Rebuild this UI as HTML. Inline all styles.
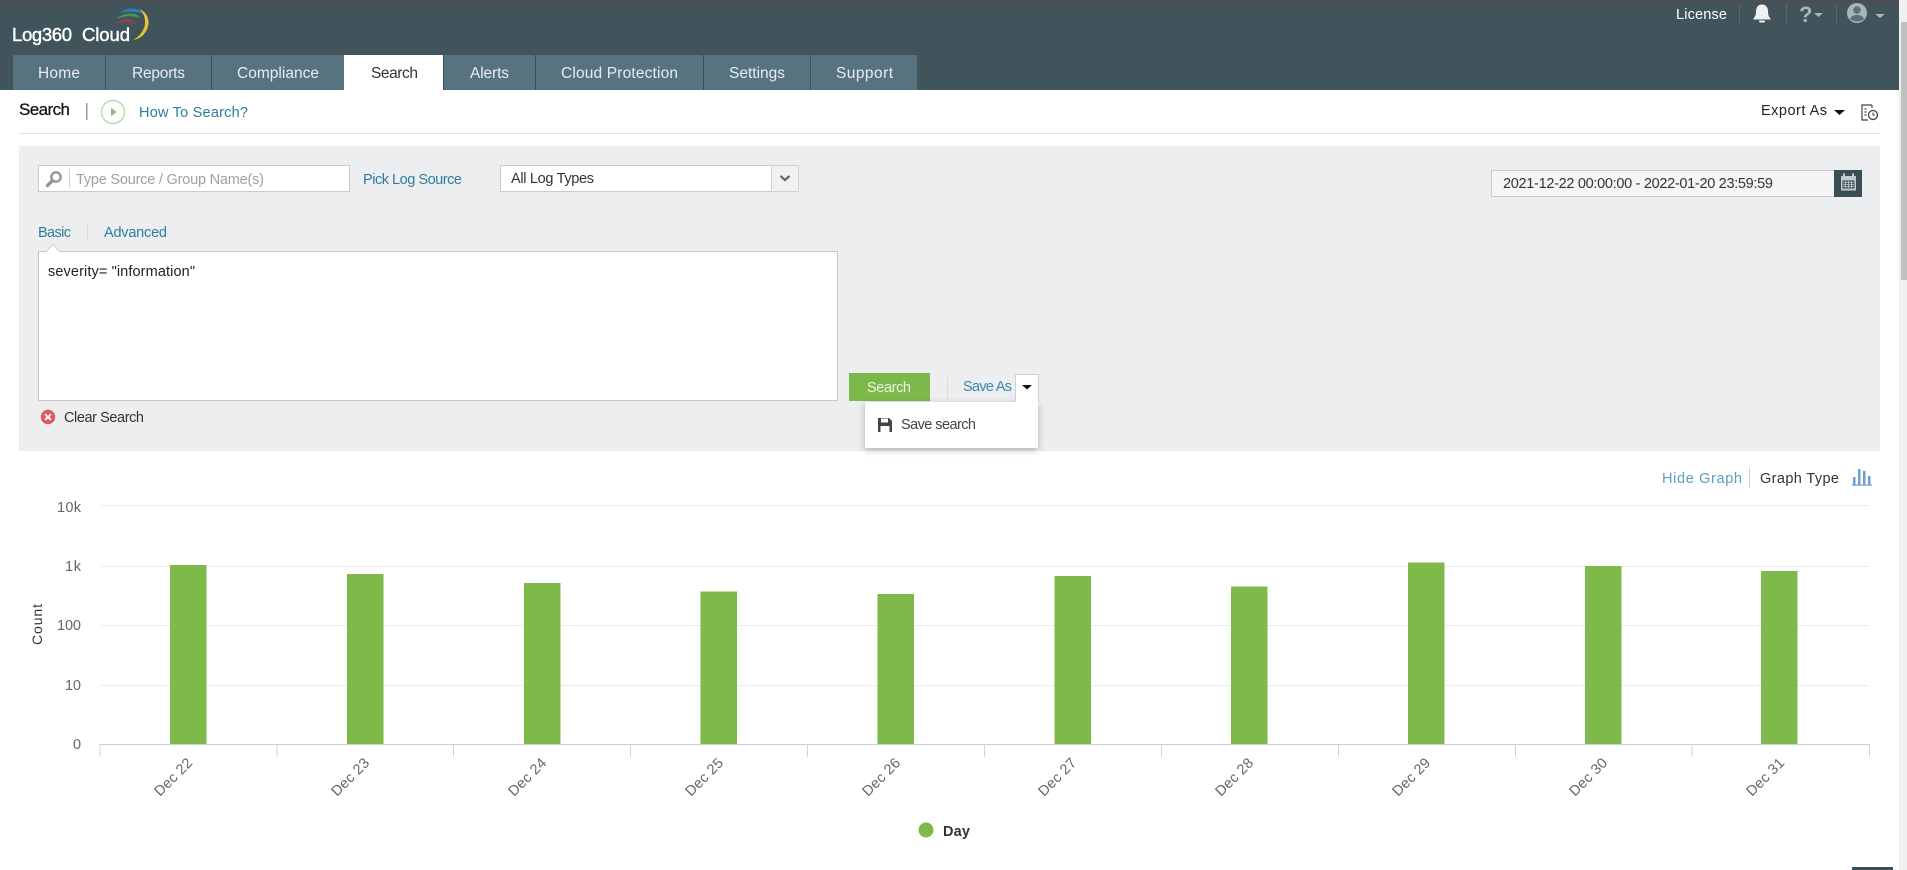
<!DOCTYPE html>
<html lang="en">
<head>
<meta charset="utf-8">
<title>Log360 Cloud - Search</title>
<style>
html,body{margin:0;padding:0;width:1907px;height:870px;overflow:hidden;background:#fff}
svg{display:block}
text{font-family:"Liberation Sans",Arial,sans-serif;font-size:14.5px;white-space:pre}
.tab{font-size:15.5px;fill:#e6edf0}
.lnk{fill:#2e7d9e}
.ax{font-size:14.5px;fill:#666}
.dt{font-size:14.5px;fill:#666}
</style>
</head>
<body>
<svg xmlns="http://www.w3.org/2000/svg" width="1907" height="870" viewBox="0 0 1907 870">
<defs>
<filter id="sh" x="-20%" y="-20%" width="140%" height="150%"><feDropShadow dx="0" dy="2" stdDeviation="3.5" flood-color="#000" flood-opacity=".28"/></filter>
</defs>
<rect width="1907" height="870" fill="#fff"/>
<!-- scrollbar -->
<rect x="1899" y="0" width="8" height="870" fill="#f0f0f0"/>
<rect x="1901" y="22" width="6" height="258" fill="#c1c1c1"/>
<!-- header -->
<rect x="0" y="0" width="1899" height="90" fill="#41545c"/>
<rect x="0" y="0" width="1899" height="3" fill="#4b4f52"/>
<!-- logo -->
<text x="12" y="41" fill="#fff" stroke="#fff" stroke-width=".45" textLength="60" style="font-size:18.5px">Log360</text>
<text x="82" y="41" fill="#fff" stroke="#fff" stroke-width=".45" textLength="48" style="font-size:18.5px">Cloud</text>
<path d="M139 9C147 12 149 19 148.500 24C147 33 141 39 133 40C139 37 144 31 145 24C145.500 17 143 12 139 9Z" fill="#e3c62c"/>
<path d="M120 13C125 8 134 7 141 11L143 14C136 11 127 11 120 13Z" fill="#2c7fb0"/>
<path d="M116 19C121 14 130 12 138 15L140 18C132 15 123 16 116 19Z" fill="#3f9a58"/>
<path d="M115 24C120 19 128 18 134 21L136 24C129 21 122 21 115 24Z" fill="#a93a46"/>
<!-- tabs -->
<rect x="12" y="55" width="905" height="35" fill="#587380"/>
<rect x="344" y="55" width="99" height="36" fill="#fff"/>
<g fill="#3c505a"><rect x="105" y="55" width="1" height="35"/><rect x="211" y="55" width="1" height="35"/><rect x="443" y="55" width="1" height="35"/><rect x="535" y="55" width="1" height="35"/><rect x="703" y="55" width="1" height="35"/><rect x="810" y="55" width="1" height="35"/><rect x="12" y="55" width="1" height="35"/></g>
<text class="tab" x="38" y="78" textLength="42">Home</text>
<text class="tab" x="132" y="78" textLength="53">Reports</text>
<text class="tab" x="237" y="78" textLength="82">Compliance</text>
<text class="tab" x="371" y="78" textLength="47" style="fill:#333">Search</text>
<text class="tab" x="470" y="78" textLength="39">Alerts</text>
<text class="tab" x="561" y="78" textLength="117">Cloud Protection</text>
<text class="tab" x="729" y="78" textLength="56">Settings</text>
<text class="tab" x="836" y="78" textLength="57">Support</text>
<!-- top right -->
<text x="1676" y="19" fill="#fff" textLength="51">License</text>
<g fill="#566a73"><rect x="1739" y="4" width="1" height="20"/><rect x="1786" y="4" width="1" height="20"/><rect x="1836" y="4" width="1" height="20"/></g>
<path d="M1762 4.500c-4 0-6 3-6 6.500 0 4-1 6-2.500 7.500v1h17v-1c-1.500-1.500-2.500-3.500-2.500-7.500 0-3.500-2-6.500-6-6.500Z" fill="#eef1f2"/>
<rect x="1759" y="20.500" width="6" height="2" rx="1" fill="#eef1f2"/>
<text x="1799" y="22" style="font-size:22px;font-weight:700" fill="#a9b5ba">?</text>
<path d="M1814 13h9l-4.500 4Z" fill="#a9b5ba"/>
<circle cx="1857" cy="13" r="10" fill="#a9b5ba"/>
<circle cx="1857" cy="10" r="3.800" fill="#5d7078"/>
<path d="M1850 19c1-3 3.500-4 7-4s6 1 7 4c-2 1.800-4.500 2.500-7 2.500s-5-.7-7-2.500Z" fill="#5d7078"/>
<path d="M1875 14h10l-5 4Z" fill="#a9b5ba"/>
<!-- sub header -->
<text x="19" y="115" style="font-size:17px" fill="#111" stroke="#111" stroke-width=".25" textLength="51">Search</text>
<rect x="86" y="103" width="1.500" height="17" fill="#999"/>
<circle cx="113" cy="112" r="11.500" fill="#fff" stroke="#bcdcae" stroke-width="1.600"/>
<path d="M111 107.500l5.500 4.500-5.500 4.500Z" fill="#8cc270"/>
<text x="139" y="117" class="lnk" textLength="109">How To Search?</text>
<text x="1761" y="115" fill="#222" textLength="66">Export As</text>
<path d="M1834 110h11l-5.500 5Z" fill="#111"/>
<path d="M1872 105h-10v15h6M1864.500 109h2M1864.500 112h2M1864.500 115h2M1872 105v3" fill="none" stroke="#444" stroke-width="1.200"/>
<circle cx="1873" cy="115" r="4.500" fill="#fff" stroke="#444" stroke-width="1.300"/>
<path d="M1873 112.500v2.500h2" fill="none" stroke="#444" stroke-width="1"/>
<rect x="19" y="133" width="1861" height="1" fill="#dfe1e2"/>
<!-- search panel -->
<rect x="19" y="146" width="1861" height="305" fill="#eceef0"/>
<rect x="38.500" y="165.500" width="311" height="26" fill="#fff" stroke="#c9cbcd"/>
<circle cx="56" cy="177" r="4.700" fill="none" stroke="#969696" stroke-width="2.400"/>
<path d="M52.500 180.500l-5 5" stroke="#969696" stroke-width="3.400" stroke-linecap="round"/>
<rect x="69" y="169" width="1" height="19" fill="#d3d3d3"/>
<text x="76" y="184" style="font-size:14.5px" fill="#a0a0a0" textLength="188">Type Source / Group Name(s)</text>
<text x="363" y="184" class="lnk" textLength="99">Pick Log Source</text>
<rect x="500.500" y="165.500" width="298" height="26" fill="#fff" stroke="#c9cbcd"/>
<rect x="771.500" y="165.500" width="27" height="26" fill="#f0f1f2" stroke="#d0d2d4"/>
<path d="M780.500 176l4.500 4 4.500-4" fill="none" stroke="#666" stroke-width="2.200"/>
<text x="511" y="183" fill="#333" style="font-size:14.5px" textLength="83">All Log Types</text>
<rect x="1491.500" y="170.500" width="343" height="26" fill="#f5f5f5" stroke="#c9cbcd"/>
<text x="1503" y="188" fill="#333" style="font-size:14.500px" textLength="270">2021-12-22 00:00:00 - 2022-01-20 23:59:59</text>
<rect x="1834" y="170" width="28" height="27" fill="#3b4d57"/>
<rect x="1841" y="176" width="15" height="14.500" fill="#c3cbcf"/>
<rect x="1843" y="173.500" width="2" height="4" fill="#c3cbcf"/><rect x="1852" y="173.500" width="2" height="4" fill="#c3cbcf"/>
<rect x="1842.500" y="180.500" width="12" height="8" fill="#3b4d57"/>
<path d="M1843 182.500h11M1843 184.500h11M1843 186.500h11M1845.500 181v7M1848.500 181v7M1851.500 181v7" stroke="#c3cbcf" stroke-width=".8"/>
<text x="38" y="237" class="lnk" textLength="33">Basic</text>
<rect x="87" y="224" width="1" height="17" fill="#d6d8da"/>
<text x="104" y="237" class="lnk" textLength="63">Advanced</text>
<rect x="38.500" y="251.500" width="799" height="149" fill="#fff" stroke="#c4c6c8"/>
<path d="M46 252l7-8 7 8" fill="#fff" stroke="#cdcfd1"/>
<rect x="47" y="251" width="12" height="2" fill="#fff"/>
<text x="48" y="276" fill="#222" textLength="147">severity= "information"</text>
<circle cx="48" cy="417" r="7.200" fill="#df5a5a"/>
<path d="M45.200 414.200l5.600 5.600M50.800 414.200l-5.600 5.600" stroke="#fff" stroke-width="2"/>
<text x="64" y="422" fill="#333" textLength="80">Clear Search</text>
<rect x="849" y="373" width="81" height="28" fill="#7cb84a"/>
<text x="867" y="392" fill="#eef6e6" textLength="44">Search</text>
<rect x="947" y="377" width="1" height="23" fill="#d9dbdd"/>
<text x="963" y="391" fill="#3d87b0" textLength="49">Save As</text>
<!-- dropdown -->
<rect x="865" y="402" width="173" height="46" fill="#fff" filter="url(#sh)"/>
<rect x="1015" y="374" width="24" height="30" fill="#fff"/>
<path d="M1015.500 402v-27.500h23v28" fill="none" stroke="#cfd1d3"/>
<path d="M1022 385h10l-5 4.500Z" fill="#111"/>
<path d="M878 418h11l3 3v11h-14Z" fill="#444"/>
<rect x="881" y="418.500" width="7" height="4" fill="#fff"/>
<rect x="880.500" y="426" width="9" height="6" fill="#fff"/>
<text x="901" y="429" fill="#444" textLength="75">Save search</text>
<!-- graph toolbar -->
<text x="1662" y="483" fill="#5a9fc0" textLength="80">Hide Graph</text>
<rect x="1749" y="467" width="1" height="21" fill="#cfd1d3"/>
<text x="1760" y="483" fill="#333" textLength="79">Graph Type</text>
<g fill="#6f9fd0"><rect x="1853" y="477" width="2.500" height="8"/><rect x="1858" y="469" width="2.500" height="16"/><rect x="1863" y="471" width="2.500" height="14"/><rect x="1868" y="476" width="2.500" height="9"/><rect x="1852" y="484.500" width="20" height="1.200"/></g>
<!-- grid -->
<g fill="#ececec"><rect x="100" y="505" width="1769" height="1"/><rect x="100" y="566" width="1769" height="1"/><rect x="100" y="625" width="1769" height="1"/><rect x="100" y="685" width="1769" height="1"/></g>
<!-- bars -->
<g fill="#7eba4a">
<rect x="170" y="565" width="36.500" height="179"/>
<rect x="347" y="574" width="36.500" height="170"/>
<rect x="524" y="583" width="36.500" height="161"/>
<rect x="700.500" y="591.500" width="36.500" height="152.500"/>
<rect x="877.500" y="594" width="36.500" height="150"/>
<rect x="1054.500" y="576" width="36.500" height="168"/>
<rect x="1231" y="586.500" width="36.500" height="157.500"/>
<rect x="1408" y="562.500" width="36.500" height="181.500"/>
<rect x="1585" y="566" width="36.500" height="178"/>
<rect x="1761" y="571" width="36.500" height="173"/>
</g>
<!-- axis -->
<rect x="100" y="744" width="1769.500" height="1" fill="#c8ced8"/>
<g fill="#d0d3d8"><rect x="99.500" y="744" width="1" height="13"/><rect x="276.500" y="744" width="1" height="13"/><rect x="453" y="744" width="1" height="13"/><rect x="630" y="744" width="1" height="13"/><rect x="807" y="744" width="1" height="13"/><rect x="984" y="744" width="1" height="13"/><rect x="1161" y="744" width="1" height="13"/><rect x="1338" y="744" width="1" height="13"/><rect x="1515" y="744" width="1" height="13"/><rect x="1691.500" y="744" width="1" height="13"/><rect x="1869" y="744" width="1" height="13"/></g>
<text class="ax" x="57" y="512" textLength="24">10k</text>
<text class="ax" x="65" y="571" textLength="16">1k</text>
<text class="ax" x="57" y="630" textLength="24">100</text>
<text class="ax" x="65" y="690" textLength="16">10</text>
<text class="ax" x="73" y="749" textLength="8">0</text>
<text transform="translate(42 645) rotate(-90)" style="font-size:14px" fill="#333" textLength="41">Count</text>
<text class="dt" transform="translate(160 797) rotate(-45)" textLength="47">Dec 22</text>
<text class="dt" transform="translate(337 797) rotate(-45)" textLength="47">Dec 23</text>
<text class="dt" transform="translate(514 797) rotate(-45)" textLength="47">Dec 24</text>
<text class="dt" transform="translate(691 797) rotate(-45)" textLength="47">Dec 25</text>
<text class="dt" transform="translate(868 797) rotate(-45)" textLength="47">Dec 26</text>
<text class="dt" transform="translate(1044 797) rotate(-45)" textLength="47">Dec 27</text>
<text class="dt" transform="translate(1221 797) rotate(-45)" textLength="47">Dec 28</text>
<text class="dt" transform="translate(1398 797) rotate(-45)" textLength="47">Dec 29</text>
<text class="dt" transform="translate(1575 797) rotate(-45)" textLength="47">Dec 30</text>
<text class="dt" transform="translate(1752 797) rotate(-45)" textLength="47">Dec 31</text>
<!-- legend -->
<circle cx="926" cy="830" r="7.500" fill="#7eba4a"/>
<text x="943" y="836" fill="#333" style="font-size:14.500px;font-weight:700" textLength="27">Day</text>
<rect x="1852" y="867" width="41" height="3" fill="#3b4d57"/>
</svg>
</body>
</html>
